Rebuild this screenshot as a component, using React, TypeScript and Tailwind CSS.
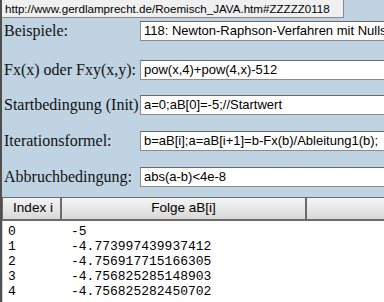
const rows = [
  { label: "Beispiele:", value: "118: Newton-Raphson-Verfahren mit Nullstellen", mt: "mt-[3px]" },
  { label: "Fx(x) oder Fxy(x,y):", value: "pow(x,4)+pow(4,x)-512", mt: "mt-[19px]" },
  { label: "Startbedingung (Init)", value: "a=0;aB[0]=-5;//Startwert", mt: "mt-[15px]" },
  { label: "Iterationsformel:", value: "b=aB[i];a=aB[i+1]=b-Fx(b)/Ableitung1(b);", mt: "mt-[16px]" },
  { label: "Abbruchbedingung:", value: "abs(a-b)<4e-8", mt: "mt-[16px]" },
];

const results = [
  ["0", "-5"],
  ["1", "-4.773997439937412"],
  ["2", "-4.756917715166305"],
  ["3", "-4.756825285148903"],
  ["4", "-4.756825282450702"],
];

export default function App() {
  return (
    <div className="flex h-[302px] w-[384px] flex-col overflow-hidden border-l-2 border-[#4f4f4f] bg-[#bfd3e3] text-[#111]">
      <div className="flex h-[18px] w-[342px] shrink-0 items-center whitespace-nowrap border-b border-r border-[#8a8a8a] bg-[#f0f0f0] pl-[3px] font-['Liberation_Sans',sans-serif] text-[11.6px] text-black">
        http://www.gerdlamprecht.de/Roemisch_JAVA.htm#ZZZZZ0118
      </div>

      {rows.map((r) => (
        <div key={r.label} className={`flex h-[20px] shrink-0 items-center ${r.mt}`}>
          <div className="w-[138px] shrink-0 whitespace-nowrap pl-[2px] font-['Liberation_Serif',serif] text-[16px] leading-none">
            {r.label}
          </div>
          <div className="flex h-[20px] w-[320px] shrink-0 items-center whitespace-nowrap border border-[#8c8c8c] border-t-[#6a6a6a] bg-white pl-[3px] font-['Liberation_Sans',sans-serif] text-[13px] text-black">
            {r.value}
          </div>
        </div>
      ))}

      <div className="mt-[10px] flex flex-1 flex-col border-t border-[#6b6b6b] bg-white">
        <div className="flex h-[23px] shrink-0 border-b-2 border-l border-[#6b6b6b] bg-gradient-to-b from-[#f4f4f4] to-[#d9d9d9] font-['Liberation_Sans',sans-serif] text-[13.5px] text-black">
          <div className="flex w-[59px] shrink-0 items-center justify-center border-r-2 border-[#6b6b6b] pl-[3px]">
            Index i
          </div>
          <div className="flex w-[245px] shrink-0 items-center justify-center border-r-2 border-[#6b6b6b]">
            Folge aB[i]
          </div>
          <div className="flex-1" />
        </div>
        <div className="flex-1 border-l border-[#cfcfcf] pt-[3px] font-['Liberation_Mono',monospace] text-[13px] leading-[15px] text-black">
          {results.map(([i, v]) => (
            <div key={i} className="flex">
              <div className="w-[68px] shrink-0 pl-[5px]">{i}</div>
              <div>{v}</div>
            </div>
          ))}
        </div>
      </div>
    </div>
  );
}
